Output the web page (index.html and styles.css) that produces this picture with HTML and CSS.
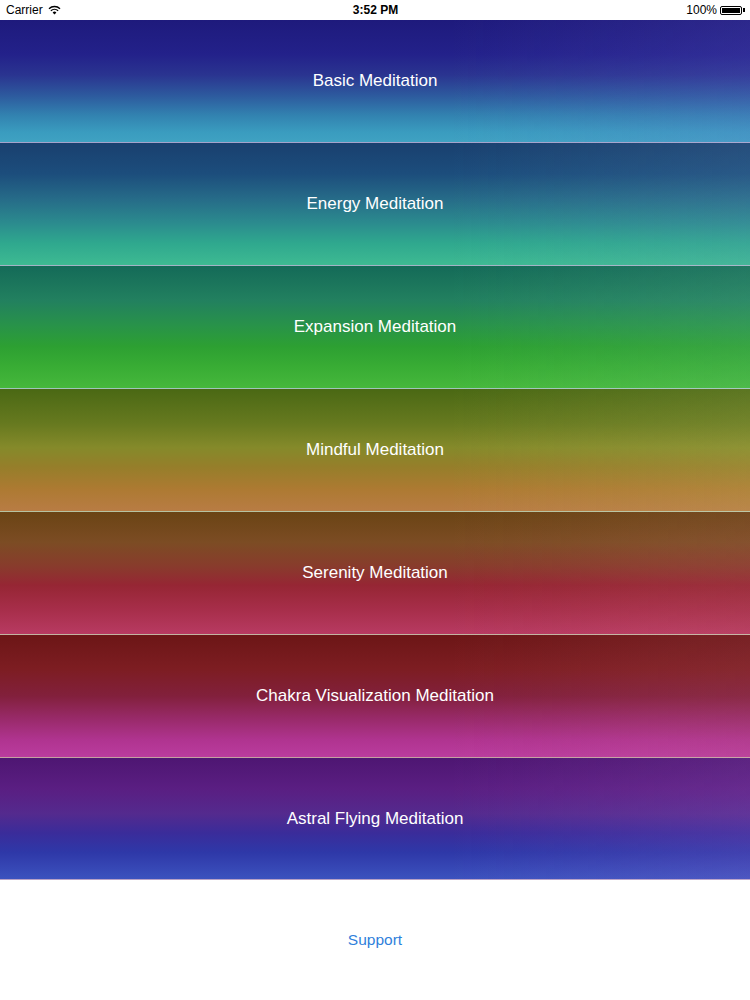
FILE: index.html
```html
<!DOCTYPE html>
<html lang="en">
<head>
    <meta charset="UTF-8">
    <meta name="viewport" content="width=device-width, initial-scale=1.0">
    <title>Meditations</title>
    <link rel="stylesheet" href="styles.css">
</head>
<body>
    <!-- Barra de estado -->
    <div class="status-bar">
        <div class="status-left">
            <span>Carrier</span>
            <svg class="wifi" width="13" height="10" viewBox="0 0 13 10">
                <path d="M6.5 9.6 L4.6 7.5 A2.8 2.8 0 0 1 8.4 7.5 Z" fill="#000"/>
                <path d="M2.9 5.8 A5.2 5.2 0 0 1 10.1 5.8" fill="none" stroke="#000" stroke-width="1.4"/>
                <path d="M1 3.8 A7.9 7.9 0 0 1 12 3.8" fill="none" stroke="#000" stroke-width="1.4"/>
            </svg>
        </div>
        <div class="status-time">3:52 PM</div>
        <div class="status-right">
            <span>100%</span>
            <div class="battery"><div class="battery-level"></div></div>
            <div class="battery-tip"></div>
        </div>
    </div>

    <!-- Lista de meditaciones -->
    <div class="list">
        <div class="item basic">Basic Meditation</div>
        <div class="item energy">Energy Meditation</div>
        <div class="item expansion">Expansion Meditation</div>
        <div class="item mindful">Mindful Meditation</div>
        <div class="item serenity">Serenity Meditation</div>
        <div class="item chakra">Chakra Visualization Meditation</div>
        <div class="item astral">Astral Flying Meditation</div>
    </div>

    <div class="footer">
        <a class="support" href="#">Support</a>
    </div>
</body>
</html>
```

FILE: styles.css
```css
body, html {
    margin: 0;
    padding: 0;
    height: 100%;
    font-family: 'Liberation Sans', Arial, sans-serif;
    background-color: #fff;
}
.status-bar {
    height: 20px;
    display: flex;
    align-items: center;
    justify-content: space-between;
    padding: 0 5px 0 6px;
    font-size: 12px;
    color: #000;
    box-sizing: border-box;
}
.status-left {
    display: flex;
    align-items: center;
    gap: 5px;
    width: 120px;
}
.status-time {
    font-weight: bold;
    font-size: 12px;
}
.status-right {
    display: flex;
    align-items: center;
    justify-content: flex-end;
    width: 120px;
}
.battery {
    width: 22px;
    height: 9px;
    border: 1px solid #000;
    border-radius: 2px;
    margin-left: 3px;
    padding: 1px;
    box-sizing: border-box;
}
.battery-level {
    width: 100%;
    height: 100%;
    background: #000;
}
.battery-tip {
    width: 2px;
    height: 4px;
    background: #000;
    margin-left: 1px;
}
.list {
    display: flex;
    flex-direction: column;
}
.item {
    height: 122px;
    border-bottom: 1px solid rgba(255,255,255,0.6);
    display: flex;
    align-items: center;
    justify-content: center;
    color: #fff;
    font-size: 17px;
}
.item:last-child {
    height: 121px;
}
.basic {
    background:
        linear-gradient(90deg, rgba(255,255,255,0) 60%, rgba(120,110,220,0.16) 100%),
        linear-gradient(#1e1a7c 0%, #23218a 28%, #2a3490 45%, #2d5a9e 62%, #3282b0 78%, #3a9cbf 92%, #3fa2c2 100%);
}
.energy {
    background:
        linear-gradient(90deg, rgba(255,255,255,0) 60%, rgba(120,160,200,0.14) 100%),
        linear-gradient(#19406f 0%, #1c4d7c 25%, #266a88 45%, #2b8a8e 65%, #2fa88e 82%, #3eba92 100%);
}
.expansion {
    background:
        linear-gradient(90deg, rgba(255,255,255,0) 60%, rgba(120,200,160,0.14) 100%),
        linear-gradient(#146a58 0%, #22805f 28%, #28924a 48%, #2da032 66%, #38ac34 82%, #46b83c 100%);
}
.mindful {
    background:
        linear-gradient(90deg, rgba(255,255,255,0) 60%, rgba(200,200,120,0.14) 100%),
        linear-gradient(#4a6814 0%, #66791f 28%, #858a2a 48%, #967e2a 64%, #ad7a32 82%, #b87c44 100%);
}
.serenity {
    background:
        linear-gradient(90deg, rgba(255,255,255,0) 60%, rgba(200,120,120,0.12) 100%),
        linear-gradient(#6a4414 0%, #7c4c24 25%, #883c2c 44%, #962634 60%, #a72e4a 80%, #b83a62 100%);
}
.chakra {
    background:
        linear-gradient(90deg, rgba(255,255,255,0) 60%, rgba(200,120,140,0.12) 100%),
        linear-gradient(#6c1616 0%, #7d1d22 28%, #82203c 50%, #982a68 68%, #b03490 86%, #ba3c9e 100%);
}
.astral {
    background:
        linear-gradient(90deg, rgba(255,255,255,0) 60%, rgba(180,120,220,0.14) 100%),
        linear-gradient(#4e1672 0%, #5a1e82 25%, #542a8e 46%, #3a2c9a 62%, #2e38a8 78%, #3c52be 100%);
}
.footer {
    height: 120px;
    display: flex;
    align-items: center;
    justify-content: center;
}
.support {
    color: #2f7fdb;
    font-size: 15.5px;
    text-decoration: none;
}
```
